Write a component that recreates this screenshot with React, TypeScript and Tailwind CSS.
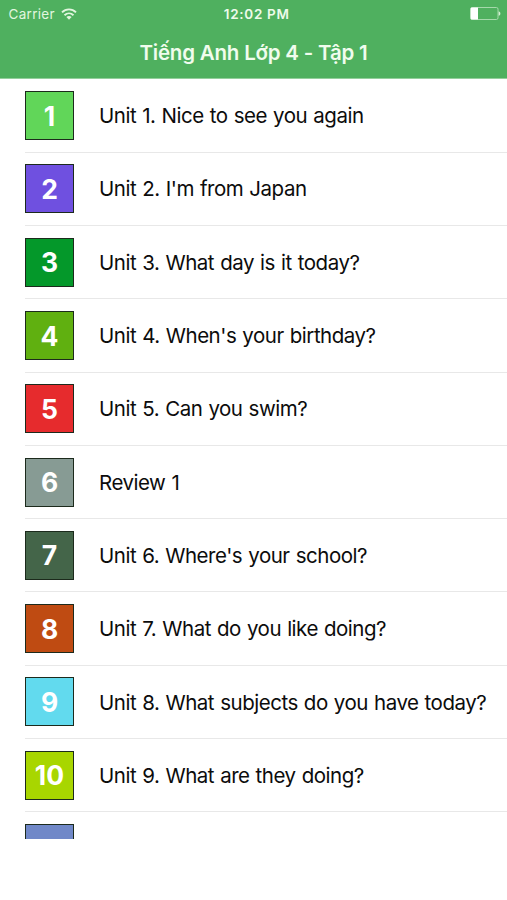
import React from 'react';

const units = [
  { id: 1, label: '1', title: 'Unit 1. Nice to see you again', bg: 'bg-[#61d659]' },
  { id: 2, label: '2', title: "Unit 2. I'm from Japan", bg: 'bg-[#6f50e0]' },
  { id: 3, label: '3', title: 'Unit 3. What day is it today?', bg: 'bg-[#04982a]' },
  { id: 4, label: '4', title: "Unit 4. When's your birthday?", bg: 'bg-[#60b010]' },
  { id: 5, label: '5', title: 'Unit 5. Can you swim?', bg: 'bg-[#e62b2d]' },
  { id: 6, label: '6', title: 'Review 1', bg: 'bg-[#879b94]' },
  { id: 7, label: '7', title: "Unit 6. Where's your school?", bg: 'bg-[#446549]' },
  { id: 8, label: '8', title: 'Unit 7. What do you like doing?', bg: 'bg-[#bf4b12]' },
  { id: 9, label: '9', title: 'Unit 8. What subjects do you have today?', bg: 'bg-[#62daee]' },
  { id: 10, label: '10', title: 'Unit 9. What are they doing?', bg: 'bg-[#a8d600]' },
  // only the top edge of this row is on screen
  { id: 11, label: '', title: '', bg: 'bg-[#7088c8]' },
];

const WifiIcon: React.FC = () => (
  <svg width="16" height="12" viewBox="0 0 16 12" fill="none" stroke="currentColor" strokeWidth="1.9">
    <path d="M1 4.4C5 .4 11 .4 15 4.4" />
    <path d="M3.5 7.2c2.6-2.4 6.4-2.4 9 0" />
    <path d="M8 11.7 5.4 9.1c1.5-1.4 3.7-1.4 5.2 0z" fill="currentColor" stroke="none" />
  </svg>
);

const BatteryIcon: React.FC = () => (
  <svg width="31" height="13" viewBox="0 0 31 13" fill="none">
    <rect x=".5" y=".5" width="27.5" height="12" rx="1.6" stroke="#a5d9ab" />
    <path d="M2 .5h6v12H2A1.3 1.3 0 0 1 .7 11V2A1.3 1.3 0 0 1 2 .5z" fill="#fff" />
    <path d="M28.6 4.2c2.4.9 2.4 3.7 0 4.6z" fill="#d5f0d4" />
  </svg>
);

const StatusBar: React.FC = () => (
  <div className="grid h-[27px] grid-cols-3 items-center pl-[8.5px] pr-[6px] text-[13.5px]">
    <div className="flex items-center gap-[6px] text-[#e2f6df]">
      <span className="pt-[1px] tracking-[0.3px]">Carrier</span>
      <WifiIcon />
    </div>
    <span className="pl-[4px] pt-[1px] text-center font-semibold tracking-[0.7px] text-[#eefbea]">12:02 PM</span>
    <div className="flex justify-end">
      <BatteryIcon />
    </div>
  </div>
);

const App: React.FC = () => {
  return (
    <div className="h-[900px] w-[507px] overflow-hidden bg-white font-['Inter','Liberation_Sans',sans-serif]">
      <header className="h-[79px] border-b border-[#93cf9b] bg-[#4fb05f]">
        <StatusBar />
        <h1 className="text-center text-[20.5px] font-semibold leading-[51px] tracking-[-0.2px] text-[#f0fced]">
          Tiếng Anh Lớp 4 - Tập 1
        </h1>
      </header>

      <ul className="h-[760px] overflow-hidden pl-[25px] pt-[0.4px]">
        {units.map((unit) => (
          <li key={unit.id} className="flex h-[73.3px] items-center gap-[25px] border-b border-[#e8e8e8]">
            <div
              className={`flex h-[49px] w-[49px] shrink-0 items-center justify-center border border-[#1c2a1c] pt-[2px] text-[26.5px] font-bold text-white ${unit.bg}`}
            >
              {unit.label}
            </div>
            <span className="whitespace-nowrap pt-[2px] text-[20.5px] tracking-[-0.48px] text-[#0c0c0c] [word-spacing:0.8px]">
              {unit.title}
            </span>
          </li>
        ))}
      </ul>
    </div>
  );
};

export default App;
